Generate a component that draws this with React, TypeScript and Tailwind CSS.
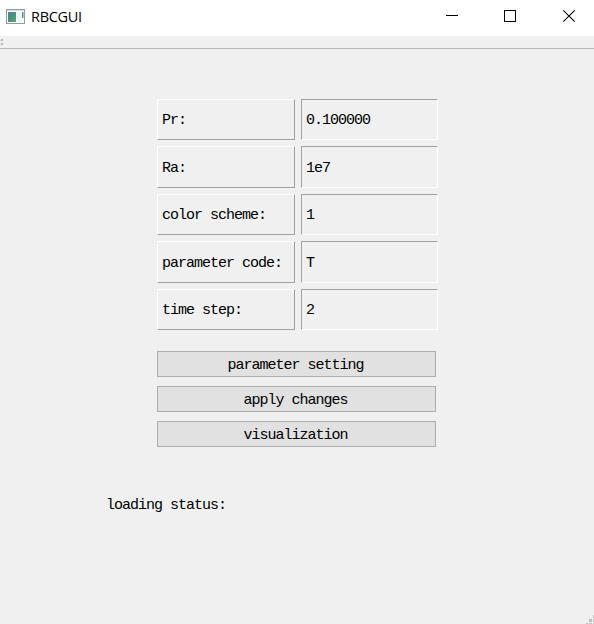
const rows = [
  { label: "Pr:", value: "0.100000", height: "h-[41px]" },
  { label: "Ra:", value: "1e7", height: "h-[42px]" },
  { label: "color scheme:", value: "1", height: "h-[41px]" },
  { label: "parameter code:", value: "T", height: "h-[42px]" },
  { label: "time step:", value: "2", height: "h-[41px]" },
];

const actions = ["parameter setting", "apply changes", "visualization"];

function AppIcon() {
  return (
    <svg width="20" height="16" viewBox="0 0 20 16" className="mb-[3px] ml-[6px] shrink-0">
      <defs>
        <linearGradient id="screen" x1="0" y1="0" x2="1" y2="1">
          <stop offset="0" stopColor="#4a7fa5" />
          <stop offset="0.5" stopColor="#48937f" />
          <stop offset="1" stopColor="#5aaa68" />
        </linearGradient>
      </defs>
      <rect x="0.5" y="0.5" width="18" height="14" fill="#fafafa" stroke="#929ba3" />
      <rect x="1" y="1" width="17" height="1" fill="#d5dbe0" />
      <rect x="2" y="3" width="8" height="10" fill="url(#screen)" />
      <rect x="11" y="3" width="4" height="10" fill="#f1f2f4" />
      <rect x="16" y="3" width="1.5" height="6" fill="url(#screen)" />
    </svg>
  );
}

function TitleBar() {
  return (
    <header className="flex h-9 items-center bg-white">
      <AppIcon />
      <h1 className="ml-[5px] mt-[-3px] flex-1 font-['Open_Sans','Noto_Sans',sans-serif] text-[14.5px] leading-5 tracking-[-0.3px]">
        RBCGUI
      </h1>
      <svg width="165" height="36" fill="none" stroke="#000" className="shrink-0">
        <path d="M17 15.5h12" shapeRendering="crispEdges" />
        <path d="M75.5 10.5h11v11h-11z" shapeRendering="crispEdges" />
        <path d="M134.3 10.3l11.4 11.4M145.7 10.3l-11.4 11.4" strokeWidth="1.1" />
      </svg>
    </header>
  );
}

export default function App() {
  return (
    <main className="flex h-[624px] w-[594px] flex-col overflow-hidden bg-[#f0f0f0] font-['Liberation_Mono',monospace] text-[15px] leading-5 tracking-[-1px] text-black">
      <TitleBar />
      <div className="h-[13px] shrink-0 border-b border-[#b8b8b8]">
        <svg width="6" height="12" shapeRendering="crispEdges">
          <path d="M1 3h2v2h-2zM1 7h2v2h-2z" fill="#b9b9b9" />
          <path d="M0 4h1v1h-1zM0 8h1v1h-1z" fill="#dcdcdc" />
        </svg>
      </div>
      <section className="ml-[157px] mt-[50px] flex w-[281px] flex-col gap-[6px]">
        {rows.map((row) => (
          <div key={row.label} className={`flex gap-[6px] ${row.height}`}>
            <div className="flex w-[138px] items-center whitespace-pre border border-b-[#a0a0a0] border-l-white border-r-[#a0a0a0] border-t-white pl-1 pt-[3px]">
              {row.label}
            </div>
            <div className="flex w-[137px] items-center border border-b-white border-l-[#a0a0a0] border-r-white border-t-[#a0a0a0] pl-1 pt-[3px]">
              {row.value}
            </div>
          </div>
        ))}
      </section>
      <section className="ml-[157px] mt-[21px] flex w-[279px] flex-col gap-[9px]">
        {actions.map((action) => (
          <button
            key={action}
            type="button"
            className="flex h-[26px] items-center justify-center border border-[#adadad] bg-[#e1e1e1] pr-[2px] pt-1"
          >
            {action}
          </button>
        ))}
      </section>
      <p className="ml-[106px] mt-[49px]">loading status:</p>
      <footer className="mt-auto flex justify-end">
        <svg width="9" height="10" fill="#bfbfbf" shapeRendering="crispEdges">
          <path d="M8 1h1v3h-1zM4 5h3v3h-3zM8 5h1v3h-1zM1 9h2v1h-2zM4 9h3v1h-3zM8 9h1v1h-1z" />
        </svg>
      </footer>
    </main>
  );
}
